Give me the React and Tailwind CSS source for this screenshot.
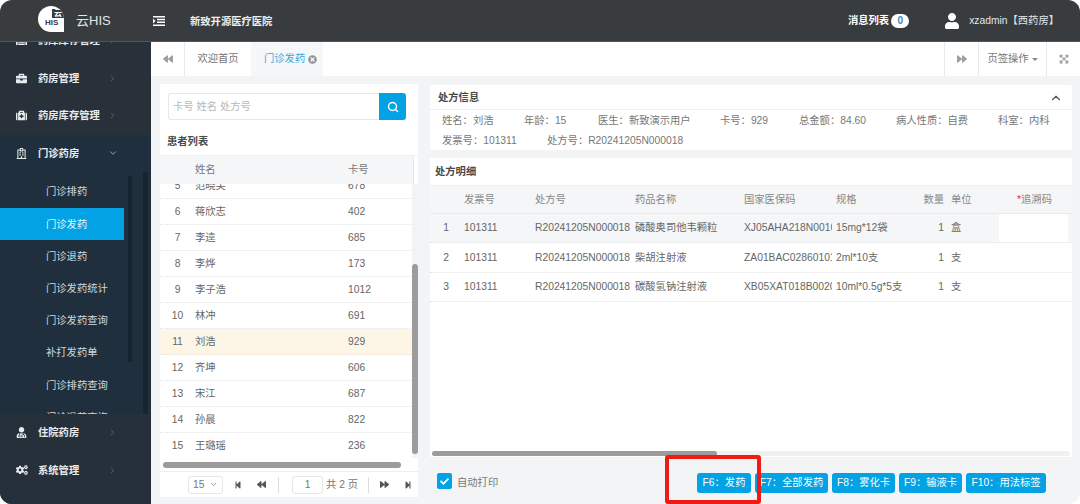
import React from 'react';
import { ChevronRight, ChevronDown, ChevronUp, Search } from 'lucide-react';
import {
  FaBriefcase, FaMedkit, FaRegHospital, FaUserMd, FaCogs, FaBackward, FaForward, FaWarehouse,
  FaStepBackward, FaStepForward, FaUser, FaExpandArrowsAlt, FaCheck, FaTimesCircle,
} from 'react-icons/fa';

const FONT = "font-['Liberation_Sans','Noto_Sans_CJK_SC',sans-serif]";

const subMenu = ['门诊排药', '门诊发药', '门诊退药', '门诊发药统计', '门诊发药查询', '补打发药单', '门诊排药查询', '门诊退药查询'];

const patients = [
  [5, '范晓芙', '678'], [6, '蒋欣志', '402'], [7, '李逵', '685'], [8, '李烨', '173'], [9, '李子浩', '1012'],
  [10, '林冲', '691'], [11, '刘浩', '929'], [12, '齐坤', '606'], [13, '宋江', '687'], [14, '孙晨', '822'], [15, '王璐瑶', '236'],
];

const details = [
  ['1', '101311', 'R20241205N000018', '磷酸奥司他韦颗粒', 'XJ05AHA218N0010', '15mg*12袋', '1', '盒'],
  ['2', '101311', 'R20241205N000018', '柴胡注射液', 'ZA01BAC0286010102', '2ml*10支', '1', '支'],
  ['3', '101311', 'R20241205N000018', '碳酸氢钠注射液', 'XB05XAT018B0020', '10ml*0.5g*5支', '1', '支'],
];

const detailCols = 'grid grid-cols-[34px_71px_100px_109px_92px_68px_40px_49px_1fr]';

const MenuRow = ({ icon, label, open }) => (
  <div className="h-[37.5px] shrink-0 flex items-center text-[#e8ecef] font-bold text-[10.3px]">
    <span className="w-[38px] pl-[16px] flex">{icon}</span>
    <span className="w-[70px]">{label}</span>
    {open ? <ChevronDown size={10} className="text-[#aab4bc]" /> : <ChevronRight size={9} className="text-[#66727c]" />}
  </div>
);

const Sidebar = () => (
  <div className="w-[151px] shrink-0 bg-[#1f2f3d] flex flex-col overflow-hidden">
    <div className="h-[130px] shrink-0 flex flex-col justify-end overflow-hidden">
      <div className="bg-[#283039]">
        <MenuRow icon={<FaWarehouse size={11} />} label="药库库存管理" />
        <MenuRow icon={<FaBriefcase size={11} />} label="药房管理" />
        <MenuRow icon={<FaMedkit size={11} />} label="药房库存管理" />
      </div>
      <MenuRow icon={<FaRegHospital size={11} />} label="门诊药房" open />
    </div>
    <div className="h-[242px] shrink-0 overflow-hidden flex">
      <div className="w-[124px] shrink-0 flex flex-col pt-[4px]">
        {subMenu.map((m) => (
          <div
            key={m}
            className={`h-[32.2px] shrink-0 flex items-center pl-[46px] text-[10.3px] ${m === '门诊发药' ? 'bg-[#02a2e4] text-[#e6f5fc]' : 'text-[#d3d8dc]'}`}
          >
            {m}
          </div>
        ))}
      </div>
      <div className="w-[4px] ml-[4px] h-[186px] mt-[4px] bg-[#16222d] rounded-sm" />
      <div className="w-[5px] ml-[11px] bg-[#18242f]" />
    </div>
    <div className="flex-1 bg-[#26303a]">
      <MenuRow icon={<FaUserMd size={11} />} label="住院药房" />
      <MenuRow icon={<FaCogs size={12} />} label="系统管理" />
    </div>
  </div>
);

const TopBar = () => (
  <div className="h-[42px] shrink-0 bg-[#383c3f] flex items-center border-b border-[#50555a]">
    <div className="relative ml-[38px] -mt-[3px] w-[26px] h-[26px] rounded-full rounded-br-[2px] bg-white shrink-0 overflow-hidden text-[#383c3f] leading-none">
      <span className="absolute top-[3px] right-0 w-[12px] h-[9px] bg-[#383c3f] text-white text-[8px] font-bold flex items-center justify-center">云</span>
      <span className="absolute top-[13px] left-[7px] text-[8px] font-bold">HIS</span>
    </div>
    <span className="ml-[12px] w-[77px] text-[13px] text-[#e3e5e6]">云HIS</span>
    <svg width="12" height="10" viewBox="0 0 12 10" className="text-white shrink-0" fill="currentColor">
      <path d="M0 0h12v1.6H0zM0 8.4h12V10H0zM4 2.8h8v1.4H4zM4 5.6h8V7H4zM0 2.6l2.6 2.4L0 7.4z" />
    </svg>
    <span className="ml-[25px] pt-[2px] text-[10.3px] font-bold text-[#eceeef]">新致开源医疗医院</span>
    <div className="flex-1" />
    <span className="text-[10.3px] font-bold text-white">消息列表</span>
    <span className="ml-[2px] w-[18px] h-[14px] rounded-full bg-white text-[#3d85c6] text-[10px] font-bold flex items-center justify-center">0</span>
    <FaUser size={16} className="ml-[35px] text-white" />
    <span className="ml-[9px] mr-[21px] text-[10.3px] text-[#e3e5e6]">xzadmin【西药房】</span>
  </div>
);

const TabBar = () => (
  <div className="h-[34px] shrink-0 bg-white flex items-stretch text-[10.3px] text-[#777]">
    <div className="w-[34px] flex items-center justify-center border-r border-[#e8eaec]"><FaBackward size={10} className="text-[#9aa1a6]" /></div>
    <div className="w-[66px] flex items-center justify-center">欢迎首页</div>
    <div className="w-[72px] bg-[#f5f7f8] flex items-center pl-[13px] gap-[3px] text-[#3ba6dd]">
      门诊发药 <FaTimesCircle size={9} className="text-[#8f979d]" />
    </div>
    <div className="flex-1" />
    <div className="w-[34px] flex items-center justify-center border-l border-[#e8eaec]"><FaForward size={10} className="text-[#9aa1a6]" /></div>
    <div className="w-[68px] flex items-center justify-center gap-[3px] border-l border-[#e8eaec]">
      页签操作 <span className="border-x-[3px] border-x-transparent border-t-[3px] border-t-[#888]" />
    </div>
    <div className="w-[34px] flex items-center justify-center border-l border-[#e8eaec]"><FaExpandArrowsAlt size={10} className="text-[#9aa1a6]" /></div>
  </div>
);

const PatientPanel = () => (
  <div className="w-[258px] h-[413px] shrink-0 bg-white flex flex-col">
    <div className="flex pt-[9px] pl-[8px]">
      <div className="w-[211px] h-[27px] border border-[#e5e7e9] border-r-0 rounded-l-[3px] flex items-center pl-[4px] text-[10.3px] text-[#b4b8bb]">卡号 姓名 处方号</div>
      <div className="w-[27px] h-[27px] bg-[#02a2e4] rounded-r-[3px] flex items-center justify-center">
        <Search size={12} strokeWidth={3} className="text-white" />
      </div>
    </div>
    <div className="h-[36px] flex items-end pb-[6px] pl-[7px] text-[10.3px] font-bold text-[#4a4a4a] border-b border-[#eef0f1]">患者列表</div>
    <div className="h-[28px] shrink-0 flex">
      <div className="w-[253px] bg-[#f4f6f8] flex items-center text-[10.3px] text-[#777]">
        <span className="w-[35px]" />
        <span className="w-[153px]">姓名</span>
        <span>卡号</span>
      </div>
      <div className="border-l border-[#e4e6e8] flex-1" />
    </div>
    <div className="h-[274px] shrink-0 flex overflow-hidden">
      <div className="w-[252px] shrink-0 overflow-hidden">
        <div className="-mt-[11px]">
          {patients.map(([no, name, card]) => (
            <div
              key={no}
              className={`h-[26px] flex items-center text-[10.3px] text-[#666] border-b border-dotted border-[#e2e4e6] ${no === 11 ? 'bg-[#fdf6e6]' : ''}`}
            >
              <span className="w-[35px] text-center">{no}</span>
              <span className="w-[153px]">{name}</span>
              <span>{card}</span>
            </div>
          ))}
        </div>
      </div>
      <div className="w-[6px] bg-[#f3f3f3] rounded overflow-hidden pt-[80px]">
        <div className="h-[190px] bg-[#9c9c9c] rounded" />
      </div>
    </div>
    <div className="h-[14px] shrink-0 px-[3px] pt-[4px] border-b border-[#eceeef]">
      <div className="h-[6px] w-[238px] bg-[#9c9c9c] rounded" />
    </div>
    <div className="flex-1 flex items-center text-[10.3px] text-[#777] pl-[28px]">
      <div className="w-[35px] h-[18px] border border-[#e5e7e9] rounded-[3px] flex items-center justify-between px-[4px]">
        15 <ChevronDown size={9} />
      </div>
      <FaStepBackward size={8} className="ml-[11px] text-[#555]" />
      <FaBackward size={9} className="ml-[15px] text-[#555]" />
      <span className="ml-[12px] h-[16px] border-l border-[#ddd]" />
      <span className="ml-[13px] w-[31px] h-[18px] border border-[#e5e7e9] rounded-[3px] flex items-center justify-center">1</span>
      <span className="ml-[3px] w-[33px] whitespace-nowrap">共 2 页</span>
      <span className="ml-[9px] h-[16px] border-l border-[#ddd]" />
      <FaForward size={9} className="ml-[11px] text-[#555]" />
      <FaStepForward size={8} className="ml-[15px] text-[#555]" />
    </div>
  </div>
);

const InfoPanel = () => (
  <div className="h-[65px] shrink-0 bg-white rounded-[2px]">
    <div className="h-[25px] flex items-center justify-between pl-[8px] pr-[9px] pt-[1px] border-b border-[#eceeef] text-[10.3px] font-bold text-[#4a4a4a]">
      处方信息
      <ChevronUp size={14} className="text-[#555]" />
    </div>
    <div className="flex pl-[12px] pt-[1px] h-[20px] items-center text-[10.3px] text-[#777]">
      <span className="w-[82px]">姓名：刘浩</span>
      <span className="w-[74px]">年龄：15</span>
      <span className="w-[122px]">医生：新致演示用户</span>
      <span className="w-[79px]">卡号：929</span>
      <span className="w-[97px]">总金额：84.60</span>
      <span className="w-[102px]">病人性质：自费</span>
      <span>科室：内科</span>
    </div>
    <div className="flex pl-[12px] pt-[1px] h-[20px] items-center text-[10.3px] text-[#777]">
      <span className="w-[105px]">发票号：101311</span>
      <span>处方号：R20241205N000018</span>
    </div>
  </div>
);

const DetailPanel = () => (
  <div className="h-[299px] mt-[8px] shrink-0 bg-white flex flex-col">
    <div className="h-[28px] shrink-0 flex items-center pl-[5px] border-b border-[#eceeef] text-[10.3px] font-bold text-[#4a4a4a]">处方明细</div>
    <div className={`${detailCols} h-[28px] shrink-0 items-center bg-[#f4f6f8] text-[10.3px] text-[#888] border-b border-[#e8eaec]`}>
      <span />
      <span>发票号</span>
      <span>处方号</span>
      <span>药品名称</span>
      <span>国家医保码</span>
      <span>规格</span>
      <span className="text-right">数量</span>
      <span className="pl-[7px]">单位</span>
      <span className="text-center pl-[4px]"><span className="text-[#e33]">*</span>追溯码</span>
    </div>
    <div className="flex-1 overflow-hidden">
      {details.map((row, i) => (
        <div
          key={row[0]}
          className={`${detailCols} h-[29.3px] items-center text-[10.3px] text-[#666] border-b border-dotted border-[#e2e4e6] ${i === 0 ? 'bg-[#f5f6f8]' : ''}`}
        >
          <span className="text-center pr-[2px]">{row[0]}</span>
          <span>{row[1]}</span>
          <span>{row[2]}</span>
          <span>{row[3]}</span>
          <span className="w-[88px] overflow-hidden whitespace-nowrap">{row[4]}</span>
          <span className="whitespace-nowrap">{row[5]}</span>
          <span className="text-right">{row[6]}</span>
          <span className="pl-[7px]">{row[7]}</span>
          <span className="flex justify-end">
            {i === 0 && <span className="w-[69px] h-[28px] bg-white mr-[4px]" />}
          </span>
        </div>
      ))}
    </div>
    <div className="h-[5px] shrink-0 mx-[2px] mb-[1px] bg-[#f0f0f0] rounded">
      <div className="h-[5px] w-[285px] bg-[#9c9c9c] rounded" />
    </div>
  </div>
);

const ActionBar = () => (
  <div className="flex-1 flex items-start pt-[16px] pl-[7px] text-[10.3px]">
    <span className="w-[15px] h-[16px] bg-[#02a2e4] rounded-[2px] flex items-center justify-center"><FaCheck size={9} className="text-white" /></span>
    <span className="ml-[5px] mt-[2px] w-[240px] text-[#777]">自动打印</span>
    <div className="flex gap-[4px] text-white">
      <button className="w-[54px] h-[20px] bg-[#02a2e4] rounded-[3px]">F6：发药</button>
      <button className="w-[73px] h-[20px] bg-[#02a2e4] rounded-[3px]">F7：全部发药</button>
      <button className="w-[63px] h-[20px] bg-[#02a2e4] rounded-[3px]">F8：雾化卡</button>
      <button className="w-[63px] h-[20px] bg-[#02a2e4] rounded-[3px]">F9：输液卡</button>
      <button className="w-[80px] h-[20px] bg-[#02a2e4] rounded-[3px]">F10：用法标签</button>
    </div>
  </div>
);

export default function App() {
  return (
    <div className={`${FONT} relative w-[1080px] h-[504px] overflow-hidden bg-white`}>
      <div className="w-full h-full rounded-[12px] overflow-hidden flex flex-col bg-[#f3f4f5]">
        <TopBar />
        <div className="flex-1 flex min-h-0">
          <Sidebar />
          <div className="flex-1 flex flex-col min-w-0">
            <TabBar />
            <div className="flex-1 flex pt-[8px] pl-[9px] pr-[8px] gap-[12px]">
              <PatientPanel />
              <div className="flex-1 flex flex-col pt-[1px] min-w-0">
                <InfoPanel />
                <DetailPanel />
                <ActionBar />
              </div>
            </div>
          </div>
        </div>
      </div>
      {/* red highlight drawn over the screenshot */}
      <div className="absolute left-[665px] top-[455px] w-[96px] h-[49px] border-[4px] border-[#f01c14] rounded-[3px]" />
    </div>
  );
}
